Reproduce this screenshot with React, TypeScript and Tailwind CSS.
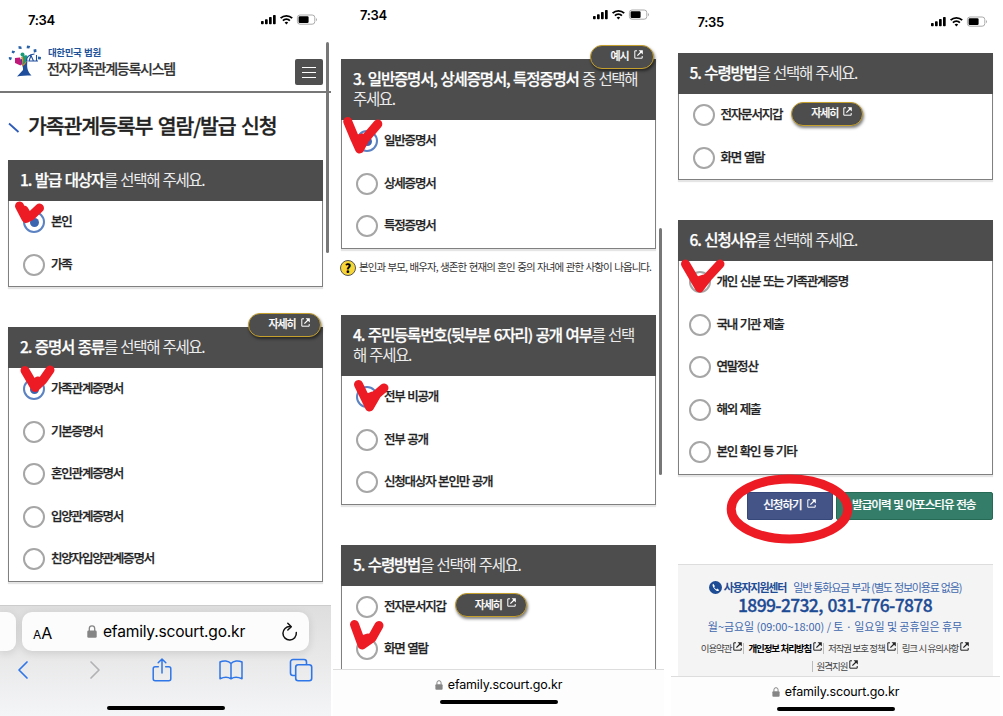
import React from 'react';

type Option = { label: string; checked?: boolean; detail?: boolean };

const KR = "font-['Noto_Sans_CJK_KR',sans-serif]";

function LinkIcon({ className = '' }: { className?: string }) {
  return (
    <svg viewBox="0 0 9 9" className={`h-[9px] w-[9px] shrink-0 ${className}`} fill="none" stroke="currentColor">
      <path d="M3 .8H.8v7.4h7.4V6" strokeWidth="1" />
      <path d="M3.4 5.6 7 2" strokeWidth="1.2" />
      <path d="M4.6.2h4.2v4.2z" fill="currentColor" stroke="none" />
    </svg>
  );
}

function Pill({ label, className = '' }: { label: string; className?: string }) {
  return (
    <button
      className={`flex h-6 items-center gap-[5px] rounded-full border-[1.5px] border-[#c5a02c] bg-[#4d4d4d] pb-[3px] pl-[19px] pr-[10px] text-[11px] font-medium tracking-[-1.1px] text-white shadow-[1px_2px_3px_rgba(0,0,0,0.5)] whitespace-nowrap ${className}`}
    >
      <span className="[-webkit-text-stroke:0.2px]">{label}</span>
      <LinkIcon className="mb-[2px]" />
    </button>
  );
}

function Radio({ checked }: { checked?: boolean }) {
  return (
    <span
      className={`flex h-[22px] w-[22px] shrink-0 items-center justify-center rounded-full border-2 bg-white ${checked ? 'border-[#5b82c2]' : 'border-[#a6a6a6]'}`}
    >
      {checked && <span className="h-[9px] w-[9px] rounded-full bg-[#3d66b0]" />}
    </span>
  );
}

type SectionProps = {
  title: string;
  rest: React.ReactNode;
  options: Option[];
  pill?: string;
  narrow?: boolean;
  className?: string;
};

function Section({ title, rest, options, pill, narrow, className = '' }: SectionProps) {
  return (
    <section className={`relative w-[315px] shrink-0 border border-t-0 border-[#808080] bg-white shadow-[0_2px_1px_rgba(0,0,0,0.1)] ${className}`}>
      <h2 className="-mx-px bg-[#4d4d4d] pb-[12px] pl-[12px] pt-[9px] text-[15.5px] leading-[20px] tracking-[-1.35px] text-[#ececec] [word-spacing:1.3px] whitespace-nowrap">
        <b className="font-medium tracking-[-1.15px] text-white [-webkit-text-stroke:0.25px]">{title}</b>
        {rest}
      </h2>
      {pill && <Pill label={pill} className="absolute right-[1.5px] -top-[14px]" />}
      <ul>
        {options.map((o) => (
          <li key={o.label} className={`flex h-[42.5px] items-center ${narrow ? 'pl-[10px]' : 'pl-[14px]'}`}>
            <Radio checked={o.checked} />
            <span className="ml-[6px] pb-[1.5px] text-[12.5px] font-medium tracking-[-1.2px] text-[#222] [-webkit-text-stroke:0.25px] [word-spacing:1px] whitespace-nowrap">{o.label}</span>
            {o.detail && <Pill label="자세히" className="mb-[3px] ml-[9px]" />}
          </li>
        ))}
      </ul>
    </section>
  );
}

function StatusBar({ time, className }: { time: string; className: string }) {
  return (
    <div className={`flex shrink-0 items-start justify-between ${className}`}>
      <span className="font-[Inter,sans-serif] text-[13px] font-semibold leading-4 tracking-[-0.3px] text-black">{time}</span>
      <svg viewBox="0 0 57 12" className="mt-[2px] h-3 w-[57px]">
        <rect x="0" y="7" width="2.7" height="3.2" rx=".7" />
        <rect x="4" y="5.2" width="2.7" height="5" rx=".7" />
        <rect x="8" y="3" width="2.7" height="7.2" rx=".7" />
        <rect x="12" y="1" width="2.7" height="9.2" rx=".7" />
        <g fill="none" stroke="#000" strokeWidth="1.8">
          <path d="M19.6 4.2a8.2 8.2 0 0 1 11.6 0" />
          <path d="M21.9 6.7a5 5 0 0 1 7 0" />
        </g>
        <path d="M25.4 10.6 23.6 8.6a2.6 2.6 0 0 1 3.6 0z" />
        <rect x="36.4" y="1" width="17.4" height="9.2" rx="2.6" fill="#fff" stroke="#aaa" strokeWidth="1" />
        <rect x="37.6" y="2.3" width="10" height="6.6" rx="1.2" />
        <path d="M55 4v3.2c1.3-.5 1.3-2.7 0-3.2z" fill="#aaa" />
      </svg>
    </div>
  );
}

function Lock({ className }: { className: string }) {
  return (
    <svg viewBox="0 0 10 13" className={className}>
      <rect x="0.3" y="5.4" width="9.4" height="7.4" rx="1.3" fill="#858585" />
      <path d="M2.3 6V3.6a2.7 2.7 0 0 1 5.4 0V6" fill="none" stroke="#858585" strokeWidth="1.3" />
    </svg>
  );
}

// Collapsed Safari address bar
function UrlBar({ className }: { className: string }) {
  return (
    <footer className={`flex shrink-0 flex-col items-center border-t border-[#ddd] bg-[#fdfdfd] ${className}`}>
      <div className="flex items-center font-[Inter,sans-serif] text-[12.5px] leading-4 tracking-[-0.15px] text-black">
        <Lock className="mr-[5px] h-[10px] w-[8px]" />
        <span>efamily.scourt.go.kr</span>
      </div>
      <div className="mt-[7px] h-1 w-[118px] rounded-full bg-black" />
    </footer>
  );
}

function CourtLogo() {
  return (
    <svg viewBox="0 0 34 34" className="h-[34px] w-[34px] shrink-0">
      <path d="M8.500 18c4 1 7 3 6.500 8L9 32.500c4-.8 9-1 14.500-1-4-4-5-8-4-15l-2-4z" fill="#1f4f9c" />
      <path d="M7 14l5-.5 2 6-1.500 2-5.500-2.500z" fill="#c2187a" />
      <path d="M13 13c2-1 4-1 6 0 0 5-1 7-5 9.500.500-3.500.500-6-1-9.500z" fill="#f08a24" />
      <path d="M14.500 12c3-1 4.500-1 5 0-.5 5-2 7-5 9 1-4 1-6 0-9z" fill="#1b9a78" />
      <circle cx="14.500" cy="10.500" r="2" fill="#1b9a78" />
      <path d="M18.500 17c0-4 2-6.500 8-7M23 11.500 21 17h4.500zM28.500 11v5.500M25.500 17h4.500" fill="none" stroke="#1f4f9c" strokeWidth="1.100" />
      <g fill="#2a62a8">
        <path d="m.8 13 3.200.5-1 2.800-2.100-1zM4 6.500l3.200.8-1.300 2.300-2.200-.8zM10.500 2l2.800.4.4 2.700-3.100-.4zM19 1.500l3.200.400-.9 2.700-2.700-.4zM25.500 5.500l2.700-.4.4 2.700-2.700.9zM30 12.500l3.100.4-.4 2.700-2.700-.400z" />
      </g>
    </svg>
  );
}

function SafariToolbar() {
  return (
    <footer className="relative h-[111px] w-[331px] shrink-0 overflow-hidden border-t border-[#ccc] bg-gradient-to-b from-[#dedede] via-[#e9e9ea] to-[#f4f5f7]">
      <div className="mt-[6px] flex h-[39px] gap-[6px]">
        <div className="w-4 rounded-r-[9px] bg-[#fcfcfc] shadow-[0_2px_8px_rgba(0,0,0,0.12)]" />
        <div className="flex w-[287px] items-center rounded-[10px] bg-[#fcfcfc] pl-[11px] pr-[11px] font-[Inter,sans-serif] text-black shadow-[0_2px_8px_rgba(0,0,0,0.12)]">
          <span className="w-[54px] pt-[2px] leading-none">
            <span className="text-[12px]">A</span>
            <span className="text-[16px]">A</span>
          </span>
          <Lock className="mr-[6px] h-[13px] w-[10px]" />
          <span className="flex-1 pt-px text-[15.6px] tracking-[-0.22px]">efamily.scourt.go.kr</span>
          <svg viewBox="0 0 17 20" className="h-5 w-[17px]" fill="none" stroke="#111" strokeWidth="1.500" strokeLinecap="round" strokeLinejoin="round">
            <path d="M9 4.600a6.700 6.700 0 1 0 6.300 6" />
            <path d="M6.800 1.300 10.300 4.700 6.800 8" />
          </svg>
        </div>
      </div>
      <div className="mt-[7px] flex h-6 items-center pl-[17px] text-[#2f76e8]">
        <svg viewBox="0 0 12 20" className="h-5 w-3" fill="none" stroke="currentColor" strokeWidth="1.700" strokeLinecap="round" strokeLinejoin="round">
          <path d="M10 2 2 10l8 8" />
        </svg>
        <svg viewBox="0 0 12 20" className="ml-[60px] h-5 w-3" fill="none" stroke="#b2b2b5" strokeWidth="1.700" strokeLinecap="round" strokeLinejoin="round">
          <path d="m2 2 8 8-8 8" />
        </svg>
        <svg viewBox="0 0 20 24" className="-mt-[1px] ml-[51px] h-6 w-5" fill="none" stroke="currentColor" strokeWidth="1.500" strokeLinecap="round" strokeLinejoin="round">
          <path d="M6.300 8.700H3.200A2 2 0 0 0 1.200 10.700v10a2 2 0 0 0 2 2h13.600a2 2 0 0 0 2-2v-10a2 2 0 0 0-2-2h-3.100M10 15V1.200M6.200 4.800 10 1l3.800 3.800" />
        </svg>
        <svg viewBox="0 0 24 20" className="ml-[47px] h-5 w-6" fill="none" stroke="currentColor" strokeWidth="1.500" strokeLinecap="round" strokeLinejoin="round">
          <path d="M12 3.500C9.500.5 4.500.2 1 2v16.700c3.800-1.800 8.500-1.700 11 .1 2.500-1.800 7.200-1.900 11-.1V2C19.500.2 14.500.5 12 3.500zM12 3.500v15.300" />
        </svg>
        <svg viewBox="0 0 24 24" className="ml-[46px] h-6 w-6" fill="none" stroke="currentColor" strokeWidth="1.600" strokeLinejoin="round">
          <path d="M6.500 17.500H4a2.500 2.500 0 0 1-2.500-2.500V4A2.500 2.500 0 0 1 4 1.500h11A2.500 2.500 0 0 1 17.500 4v2.500" />
          <rect x="6.700" y="6.700" width="16" height="16" rx="2.500" />
        </svg>
      </div>
      <div className="ml-[107px] mt-[24px] h-1 w-[118px] rounded-full bg-black" />
    </footer>
  );
}

const rest = (particle: string) => <>{particle} 선택해 주세요.</>;

function FirstPhone() {
  return (
    <div className="relative flex w-[333px] shrink-0 flex-col">
      <div className="flex min-h-0 flex-1 flex-col">
        <StatusBar time="7:34" className="h-10 pl-7 pr-[15px] pt-[12px]" />
        <header className="flex h-[53px] w-[331px] shrink-0 items-start border-b-2 border-[#777] pl-2 pt-1">
          <CourtLogo />
          <div className="ml-[5px] mt-[2px] flex-1 whitespace-nowrap">
            <div className="pl-px text-[9.5px] font-bold leading-[12px] tracking-[-0.4px] text-[#1d5299] [word-spacing:1px]">대한민국 법원</div>
            <div className="text-[14px] font-medium leading-[20px] tracking-[-1.25px] text-[#333] [-webkit-text-stroke:0.2px]">전자가족관계등록시스템</div>
          </div>
          <button className="mr-2 mt-[15px] flex h-[26px] w-7 flex-col items-center justify-center gap-[4px] rounded-[2px] bg-[#505050]">
            <span className="h-px w-[14px] bg-white" />
            <span className="h-px w-[14px] bg-white" />
            <span className="h-px w-[14px] bg-white" />
          </button>
        </header>
        <div className="flex h-[67px] shrink-0 items-center pb-[3px] pl-2">
          <svg viewBox="0 0 12 12" className="mt-[6px] h-3 w-3">
            <path d="M1 1.500 10.500 10" stroke="#2e5bb8" strokeWidth="1.800" />
          </svg>
          <h1 className="ml-[8px] text-[20.5px] font-medium tracking-[-1.1px] text-[#222] [-webkit-text-stroke:0.3px] [word-spacing:1.8px] whitespace-nowrap">가족관계등록부 열람/발급 신청</h1>
        </div>
        <Section
          className="ml-2"
          title="1. 발급 대상자"
          rest={rest('를')}
          options={[{ label: '본인', checked: true }, { label: '가족' }]}
        />
        <Section
          className="ml-2 mt-10"
          title="2. 증명서 종류"
          rest={rest('를')}
          pill="자세히"
          options={[
            { label: '가족관계증명서', checked: true },
            { label: '기본증명서' },
            { label: '혼인관계증명서' },
            { label: '입양관계증명서' },
            { label: '친양자입양관계증명서' },
          ]}
        />
      </div>
      <SafariToolbar />
      <div className="absolute left-[326px] top-[42px] h-[211px] w-[3px] rounded-full bg-[#777]" />
    </div>
  );
}

function SecondPhone() {
  return (
    <div className="relative flex w-[338px] shrink-0 flex-col">
      <div className="flex h-[669px] shrink-0 flex-col overflow-hidden">
        <StatusBar time="7:34" className="h-[59px] pl-[27px] pr-[21px] pt-[7px]" />
        <Section
          className="ml-2"
          title="3. 일반증명서, 상세증명서, 특정증명서"
          rest={<> 중 선택해<br />주세요.</>}
          pill="예시"
          options={[{ label: '일반증명서', checked: true }, { label: '상세증명서' }, { label: '특정증명서' }]}
        />
        <div className="ml-[7px] flex h-[66.5px] shrink-0 items-start gap-[3px] pt-[11px]">
          <span className="flex h-4 w-4 items-center justify-center rounded-full border border-[#555] bg-[#f7d536] text-[12px] font-black leading-none text-black">?</span>
          <span className="text-[10.5px] leading-[13px] tracking-[-0.93px] text-[#333] [word-spacing:1px] whitespace-nowrap">본인과 부모, 배우자, 생존한 현재의 혼인 중의 자녀에 관한 사항이 나옵니다.</span>
        </div>
        <Section
          className="ml-2"
          title="4. 주민등록번호(뒷부분 6자리) 공개 여부"
          rest={<>를 선택<br />해 주세요.</>}
          options={[{ label: '전부 비공개', checked: true }, { label: '전부 공개' }, { label: '신청대상자 본인만 공개' }]}
        />
        <Section
          className="ml-2 mt-10"
          title="5. 수령방법"
          rest={rest('을')}
          options={[{ label: '전자문서지갑', detail: true }, { label: '화면 열람' }]}
        />
      </div>
      <UrlBar className="h-[47px] w-[331px] pt-[7px]" />
      <div className="absolute left-[326px] top-[228px] h-[247px] w-[3px] rounded-full bg-[#777]" />
    </div>
  );
}

function FooterLink({ label, bold, first }: { label: string; bold?: boolean; first?: boolean }) {
  return (
    <a className={`flex h-[11px] items-center whitespace-nowrap ${first ? '' : 'border-l border-[#bbb] pl-1'} ${bold ? 'font-bold text-black' : 'text-[#444]'}`}>
      {label}
      <LinkIcon className="mb-[3px] ml-[2px] text-[#222]" />
    </a>
  );
}

function ThirdPhone() {
  return (
    <div className="flex w-[332px] shrink-0 flex-col">
      <div className="flex h-[676px] shrink-0 flex-col overflow-hidden pl-[6.500px]">
        <StatusBar time="7:35" className="h-[53px] pl-5 pr-[15px] pt-[14px]" />
        <Section
          title="5. 수령방법"
          rest={rest('을')}
          options={[{ label: '전자문서지갑', detail: true }, { label: '화면 열람' }]}
        />
        <Section
          className="mt-10"
          narrow
          title="6. 신청사유"
          rest={rest('를')}
          options={[
            { label: '개인 신분 또는 가족관계증명' },
            { label: '국내 기관 제출' },
            { label: '연말정산' },
            { label: '해외 제출' },
            { label: '본인 확인 등 기타' },
          ]}
        />
        <div className="mt-[17px] flex h-7 w-[315px] shrink-0 justify-end gap-[3px] text-[11.5px] font-medium tracking-[-0.950px] text-white [-webkit-text-stroke:0.2px] whitespace-nowrap">
          <button className="flex w-[86px] items-center justify-center gap-[5px] rounded-[2px] border border-[#36477a] bg-[#445487] pb-[2px]">
            신청하기
            <LinkIcon className="mb-[2px]" />
          </button>
          <button className="flex w-[157px] items-center justify-end rounded-[2px] border border-[#266a56] bg-[#347d69] pb-[2px] pr-[16px] [word-spacing:1px]">발급이력 및 아포스티유 전송</button>
        </div>
        <div className="mt-[44px] flex h-[116px] w-[315px] shrink-0 flex-col items-center border-t border-[#ddd] bg-[#f4f4f4] pt-[14px] text-[#3f68ae]">
          <div className="flex h-4 items-center text-[11px] leading-4 tracking-[-1.2px] [word-spacing:1px] whitespace-nowrap">
            <svg viewBox="0 0 13 13" className="mr-[2px] mt-[2px] h-[13px] w-[13px]">
              <circle cx="6.500" cy="6.500" r="6.500" fill="#1d4b94" />
              <path d="M4.300 2.700c-1 .5-1 2 .1 3.700s2.600 3.300 4 3.600c.9.200 1.500-.4 1.600-1.100L8.300 7.600l-1 .8C6.400 7.900 5.500 6.900 5.100 6l.9-.8z" fill="#fff" />
            </svg>
            <b className="font-bold text-[#1d4b94]">사용자지원센터</b>
            <span className="ml-[7px]">일반 통화요금 부과 (별도 정보이용료 없음)</span>
          </div>
          <div className="h-5 text-[17.5px] font-medium leading-5 tracking-[-0.650px] text-[#1d4b94] [-webkit-text-stroke:0.3px] [word-spacing:1.5px] whitespace-nowrap">1899-2732, 031-776-7878</div>
          <div className="mt-[3px] h-4 text-[11px] leading-4 tracking-[-0.060px] whitespace-nowrap">월~금요일 (09:00~18:00) / 토 · 일요일 및 공휴일은 휴무</div>
          <div className="mt-[9px] flex h-4 gap-px text-[9.500px] leading-[11px] tracking-[-1.100px] [word-spacing:0.5px]">
            <FooterLink first label="이용약관" />
            <FooterLink bold label="개인정보 처리방침" />
            <FooterLink label="저작권 보호 정책" />
            <FooterLink label="링크 시 유의사항" />
          </div>
          <div className="mt-[2px] flex h-4 text-[9.500px] leading-[11px] tracking-[-1px]">
            <FooterLink label="원격지원" />
          </div>
        </div>
      </div>
      <UrlBar className="h-10 w-[329px] pt-[7px]" />
    </div>
  );
}

// Hand-drawn red marks over the three screens
function Marks() {
  return (
    <svg viewBox="0 0 1003 716" className="pointer-events-none absolute inset-0 h-[716px] w-[1003px]" fill="none" stroke="#ed1c24" strokeWidth="9" strokeLinecap="round" strokeLinejoin="round">
      <path d="M19.500 206 26 218.500 31 216 39.500 208M24 210 28 217" />
      <path d="M25 370.500 35 387.500 43 380 50 370M35 385 38 381" />
      <path d="M347.700 121.500 355 139 359.500 149 365 139 377.800 124M358 139 362 138" />
      <path d="M358.500 384.500 369.500 407 377 394 384 388M368 398 373 396" />
      <path d="M354.500 624.500 362 645 372 638 379 625.500M362 640 368 638" />
      <path d="M685.500 264 699.500 288 708 277 720 264M698 281 704 279" />
      <ellipse cx="789.500" cy="509" rx="58.300" ry="30" />
    </svg>
  );
}

export default function App() {
  return (
    <div className={`relative flex h-[716px] w-[1003px] overflow-hidden bg-white ${KR}`}>
      <FirstPhone />
      <SecondPhone />
      <ThirdPhone />
      <Marks />
    </div>
  );
}
